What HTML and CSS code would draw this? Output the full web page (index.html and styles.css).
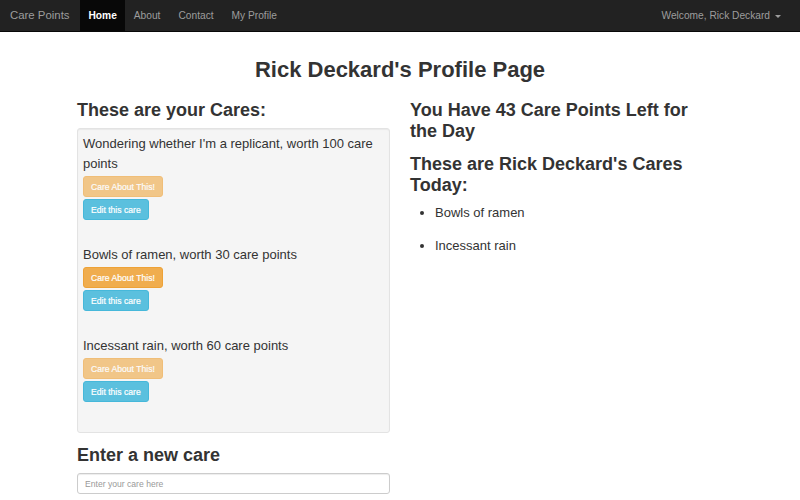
FILE: index.html
```html
<!DOCTYPE html>
<html>
<head>
<meta charset="utf-8">
<link rel="stylesheet" href="styles.css">
</head>
<body>
<nav class="navbar">
  <div class="nav-left">
    <a class="brand">Care Points</a>
    <a class="nav-link active">Home</a>
    <a class="nav-link">About</a>
    <a class="nav-link">Contact</a>
    <a class="nav-link">My Profile</a>
  </div>
  <div class="nav-right">
    <a class="nav-link">Welcome, Rick Deckard <span class="caret"></span></a>
  </div>
</nav>
<main class="container">
  <h2 class="page-title">Rick Deckard's Profile Page</h2>
  <div class="row">
    <div class="col">
      <h3 class="heading">These are your Cares:</h3>
      <div class="well">
        <div class="care">
          <p>Wondering whether I'm a replicant, worth 100 care points</p>
          <button class="btn btn-warning disabled">Care About This!</button>
          <button class="btn btn-info">Edit this care</button>
        </div>
        <div class="care">
          <p>Bowls of ramen, worth 30 care points</p>
          <button class="btn btn-warning">Care About This!</button>
          <button class="btn btn-info">Edit this care</button>
        </div>
        <div class="care">
          <p>Incessant rain, worth 60 care points</p>
          <button class="btn btn-warning disabled">Care About This!</button>
          <button class="btn btn-info">Edit this care</button>
        </div>
      </div>
      <h3 class="heading new-care">Enter a new care</h3>
      <input class="form-control" type="text" placeholder="Enter your care here">
    </div>
    <div class="col">
      <h3 class="heading narrow">You Have 43 Care Points Left for the Day</h3>
      <h3 class="heading second">These are Rick Deckard's Cares Today:</h3>
      <ul class="care-list">
        <li>Bowls of ramen</li>
        <li>Incessant rain</li>
      </ul>
    </div>
  </div>
</main>
</body>
</html>
```

FILE: styles.css
```css
* { box-sizing: border-box; }
html, body { margin: 0; padding: 0; }
body {
  font-family: "Liberation Sans", Arial, sans-serif;
  font-size: 13px;
  line-height: 20px;
  color: #333;
  background: #fff;
}
.navbar {
  height: 32px;
  background: #222;
  border-bottom: 1px solid #080808;
  display: flex;
  justify-content: space-between;
  align-items: stretch;
  padding: 0 10px 0 10px;
}
.nav-left, .nav-right { display: flex; align-items: stretch; }
.brand {
  color: #9d9d9d;
  font-size: 11.4px;
  line-height: 31px;
  padding: 0 10px 0 0;
}
.nav-link {
  color: #9d9d9d;
  font-size: 10.2px;
  line-height: 31px;
  padding: 0 9px;
  display: flex;
  align-items: center;
}
.nav-link.active {
  background: #080808;
  color: #fff;
  font-weight: bold;
  padding: 0 8px 0 9px;
}
.caret {
  display: inline-block;
  width: 0; height: 0;
  margin-left: 5px;
  border-top: 3px solid #9d9d9d;
  border-left: 3px solid transparent;
  border-right: 3px solid transparent;
  margin-top: 1px;
}
.container {
  width: 646px;
  margin: 0 auto;
}
.page-title {
  font-size: 22px;
  line-height: 24px;
  font-weight: bold;
  text-align: center;
  margin: 26px 0 18px;
}
.row { display: flex; gap: 20px; }
.col { flex: 1; min-width: 0; }
.heading {
  font-size: 18px;
  line-height: 21px;
  font-weight: bold;
  margin: 0 0 7px;
}
.heading.narrow { max-width: 300px; }
.heading.second { margin-top: 12px; }
.well {
  background: #f5f5f5;
  border: 1px solid #e3e3e3;
  border-radius: 3px;
  box-shadow: inset 0 1px 1px rgba(0,0,0,.05);
  padding: 5px 5px 5px;
}
.care { margin-bottom: 25px; }
.care p { margin: 0 0 2px; }
.btn {
  display: block;
  height: 21px;
  padding: 0 7px;
  font-family: "Liberation Sans", Arial, sans-serif;
  font-size: 8.6px;
  color: #fff;
  border: 1px solid;
  border-radius: 3px;
  margin-bottom: 2px;
  cursor: pointer;
  -webkit-text-stroke: 0.2px #fff;
}
.btn-warning { background: #f0ad4e; border-color: #eea236; }
.btn-info { background: #5bc0de; border-color: #46b8da; }
.btn.disabled { opacity: .65; }
.new-care { margin-top: 12px; }
.form-control {
  display: block;
  width: 100%;
  height: 21px;
  border: 1px solid #ccc;
  border-radius: 3px;
  box-shadow: inset 0 1px 1px rgba(0,0,0,.075);
  padding: 0 7px;
  font-family: "Liberation Sans", Arial, sans-serif;
  font-size: 8.6px;
  color: #555;
}
.form-control::placeholder { color: #999; }
.care-list {
  margin: 6px 0 0;
  padding-left: 25px;
}
.care-list li { margin-bottom: 13px; }
```
